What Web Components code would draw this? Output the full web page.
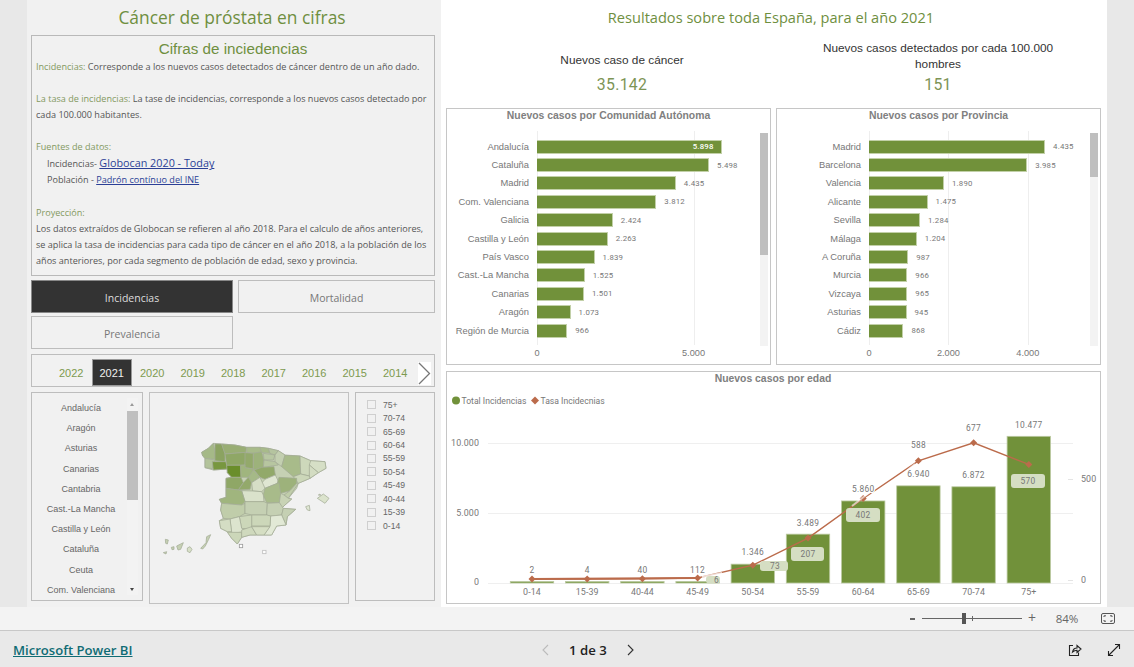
<!DOCTYPE html>
<html lang="es">
<head>
<meta charset="utf-8">
<title>Cáncer de próstata en cifras</title>
<style>
  html, body { margin: 0; padding: 0; height: 100%; overflow: hidden; background: #e9e9e9; }
  body { font-family: "Open Sans", sans-serif; }
</style>
</head>
<body>
<pbi-app></pbi-app>

<script>
const GREEN = '#71913a';
const TITLE_GREEN = '#6f8f3f';
const BAR_DATA_CCAA = [['Andalucía',5898],['Cataluña',5498],['Madrid',4435],['Com. Valenciana',3812],['Galicia',2424],['Castilla y León',2263],['País Vasco',1839],['Cast.-La Mancha',1525],['Canarias',1501],['Aragón',1073],['Región de Murcia',966]];
const BAR_DATA_PROV = [['Madrid',4435],['Barcelona',3985],['Valencia',1890],['Alicante',1475],['Sevilla',1284],['Málaga',1204],['A Coruña',987],['Murcia',966],['Vizcaya',965],['Asturias',945],['Cádiz',868]];

function fmt(n) {
    return String(n).replace(/\B(?=(\d{3})+$)/g, '.');
}

class PbiInfoCard extends HTMLElement {
    constructor() {
        super();
        this.attachShadow({ mode: 'open' });
        this.shadowRoot.innerHTML = `
            <style>
                :host { display: block; box-sizing: border-box; height: 241px; width: 404px; border: 1px solid #b9b9b9; padding: 4px 4px 0 4px; color: #555; font: 9.1px/16.1px "Open Sans", sans-serif; white-space: nowrap; }
                h2 { margin: 0 0 1px; font: 15.2px/18px "Liberation Sans", sans-serif; color: ${TITLE_GREEN}; text-align: center; }
                p { margin: 0 0 16px; }
                b { font-weight: normal; color: #83995f; }
                .in { padding-left: 11px; display: block; }
                a { color: #2b3f96; text-decoration: underline; }
                .big { font-size: 10.8px; }
            </style>
            <h2>Cifras de inciedencias</h2>
            <p><b>Incidencias:</b> Corresponde a los nuevos casos detectados de cáncer dentro de un año dado.</p>
            <p><b>La tasa de incidencias:</b> La tase de incidencias, corresponde a los nuevos casos detectado por<br>cada 100.000 habitantes.</p>
            <p><b>Fuentes de datos:</b><br>
                <span class="in">Incidencias- <a class="big">Globocan 2020 - Today</a></span>
                <span class="in">Población - <a>Padrón contínuo del INE</a></span></p>
            <p><b>Proyección:</b><br>Los datos extraídos de Globocan se refieren al año 2018. Para el calculo de años anteriores,<br>se aplica la tasa de incidencias para cada tipo de cáncer en el año 2018, a la población de los<br>años anteriores, por cada segmento de población de edad, sexo y provincia.</p>
        `;
    }
}
customElements.define('pbi-info-card', PbiInfoCard);

class PbiTabs extends HTMLElement {
    constructor() {
        super();
        this.attachShadow({ mode: 'open' });
        this.shadowRoot.innerHTML = `
            <style>
                :host { display: grid; grid-template-columns: 202px 197px; grid-auto-rows: 33px; column-gap: 5px; row-gap: 3px; }
                div { box-sizing: border-box; display: flex; align-items: center; justify-content: center; padding-top: 2px; border: 1px solid #bdbdbd; color: #777; font: 10.5px "Open Sans", sans-serif; }
                .on { background: #333; color: #ddd; border-color: #888; }
            </style>
            <div class="on">Incidencias</div><div>Mortalidad</div><div>Prevalencia</div>
        `;
    }
}
customElements.define('pbi-tabs', PbiTabs);

class PbiYears extends HTMLElement {
    constructor() {
        super();
        this.attachShadow({ mode: 'open' });
        const years = [2022,2021,2020,2019,2018,2017,2016,2015,2014];
        this.shadowRoot.innerHTML = `
            <style>
                :host { display: flex; position: relative; box-sizing: border-box; width: 404px; height: 33px; border: 1px solid #bdbdbd; padding: 4px 0 0 19px; font: 11px "Liberation Sans", sans-serif; color: #7d9a4f; }
                span { width: 40.5px; display: flex; align-items: center; justify-content: center; padding-top: 1px; box-sizing: border-box; }
                .on { background: #333; color: #f0f0f0; outline: 1px solid #999; outline-offset: -1px; font-weight: normal; }
                svg { position: absolute; right: 3px; top: 7px; background: #fff; }
            </style>
            ${years.map(y => `<span class="${y === 2021 ? 'on' : ''}">${y}</span>`).join('')}
            <svg width="13" height="23" viewBox="0 0 13 23"><polyline points="1,1 11.5,11.5 1,22" fill="none" stroke="#777" stroke-width="1.3"/></svg>
        `;
    }
}
customElements.define('pbi-years', PbiYears);

class PbiRegionList extends HTMLElement {
    constructor() {
        super();
        this.attachShadow({ mode: 'open' });
        const items = ['Andalucía','Aragón','Asturias','Canarias','Cantabria','Cast.-La Mancha','Castilla y León','Cataluña','Ceuta','Com. Valenciana'];
        this.shadowRoot.innerHTML = `
            <style>
                :host { display: block; position: relative; box-sizing: border-box; width: 112px; height: 209px; border: 1px solid #bdbdbd; padding-top: 5px; font: 9px "Liberation Sans", sans-serif; color: #666; }
                div.i { width: 98px; height: 20.2px; display: flex; align-items: center; justify-content: center; }
                .track { position: absolute; left: 95px; top: 5px; width: 11px; height: 197px; background: #f3f3f3; }
                .thumb { position: absolute; left: 0; top: 13px; width: 11px; height: 89px; background: #bfbfbf; }
                .up, .down { position: absolute; left: 3px; width: 0; height: 0; border: 2.5px solid transparent; }
                .up { top: 3px; border-bottom: 3px solid #999; }
                .down { bottom: 2px; border-top: 3px solid #444; }
            </style>
            ${items.map(i => `<div class="i">${i}</div>`).join('')}
            <div class="track"><div class="thumb"></div><div class="up"></div><div class="down"></div></div>
        `;
    }
}
customElements.define('pbi-region-list', PbiRegionList);

class PbiAgeList extends HTMLElement {
    constructor() {
        super();
        this.attachShadow({ mode: 'open' });
        const ages = ['75+','70-74','65-69','60-64','55-59','50-54','45-49','40-44','15-39','0-14'];
        this.shadowRoot.innerHTML = `
            <style>
                :host { display: block; box-sizing: border-box; width: 80px; height: 209px; border: 1px solid #bdbdbd; padding: 5px 0 0 11px; font: 8.6px "Liberation Sans", sans-serif; color: #666; }
                div { display: flex; align-items: center; gap: 7px; height: 13.45px; }
                i { display: block; box-sizing: border-box; width: 9px; height: 9px; border: 1px solid #cfcfcf; }
            </style>
            ${ages.map(a => `<div><i></i>${a}</div>`).join('')}
        `;
    }
}
customElements.define('pbi-age-list', PbiAgeList);

class PbiMap extends HTMLElement {
    constructor() {
        super();
        this.attachShadow({ mode: 'open' });
        // provincias a mano, en coordenadas 540x450
        const coast = '155,97 175,85 190,70 215,72 255,75 290,82 330,82 355,85 385,92 405,105 450,108 482,122 525,125 528,145 505,158 480,175 445,190 440,205 415,235 425,237 405,255 395,265 437,268 412,290 408,315 380,318 365,345 320,345 300,345 275,352 262,372 245,355 232,335 212,325 208,302 220,295 212,270 215,250 208,238 228,232 228,175 245,172 232,158 232,147 190,150 165,143 165,115 158,108';
        const provs = [
            ['155,97 175,85 190,70 195,95 195,118 165,115 158,108','#a5b987'],
            ['195,72 215,72 225,100 225,125 195,122 195,95','#8ba361'],
            ['165,115 195,120 187,146 165,143','#b3c39b'],
            ['187,125 228,125 232,147 190,150','#78973f'],
            ['215,72 255,75 290,82 288,97 225,102','#99ae74'],
            ['290,82 330,82 335,97 310,100 290,97','#a8bb8a'],
            ['225,102 288,97 285,135 230,136','#8fa766'],
            ['230,136 272,136 273,172 245,172 232,158','#6a8e2b'],
            ['285,98 310,100 310,147 285,143','#93a96b'],
            ['310,100 335,95 342,120 340,145 310,150','#9db27b'],
            ['330,82 355,85 360,100 335,97','#a8bb8a'],
            ['355,85 385,92 375,105 360,100','#b5c49f'],
            ['340,100 375,105 370,120 342,120','#b8c7a2'],
            ['385,92 405,105 395,140 375,125 375,105','#c3cfb0'],
            ['342,120 375,125 385,135 340,142','#b7c6a0'],
            ['405,106 450,108 452,162 430,170 395,140','#a8bb8a'],
            ['450,108 482,122 478,168 452,162','#cdd8bb'],
            ['482,122 525,125 528,145 505,158 478,135','#d6dfc6'],
            ['478,135 505,158 480,175 478,168','#d3dcc2'],
            ['452,162 478,168 480,175 445,190 430,170','#ccd7b9'],
            ['272,136 285,135 285,143 310,147 308,165 295,172 273,172','#a0b57e'],
            ['335,142 372,140 376,165 345,178 330,172 312,150','#92a96a'],
            ['295,172 310,150 330,172 305,188','#a5b987'],
            ['228,175 245,172 273,172 280,188 265,210 228,205','#8fa766'],
            ['265,210 280,188 295,172 305,188 300,208','#93a96b'],
            ['345,178 376,165 387,188 345,205 330,195','#dfe6d2'],
            ['305,188 330,172 345,205 335,215 308,213','#d6dec6'],
            ['387,172 440,175 440,190 420,212 392,220 380,195','#9db27b'],
            ['440,190 445,190 415,235 402,225 420,212','#c0cdaa'],
            ['345,205 387,188 392,220 390,248 350,248 340,225','#a8bb8a'],
            ['392,220 402,225 415,235 425,237 405,255 395,265 388,248','#c8d3b5'],
            ['275,212 308,213 335,215 340,225 342,245 285,245','#dae2cb'],
            ['228,205 265,210 275,212 285,245 275,255 215,250 208,238 228,232','#a0b57e'],
            ['215,250 275,255 285,250 285,280 268,290 240,297 220,295 212,270','#c0cdaa'],
            ['285,245 342,245 352,250 350,285 305,285 285,280','#c5d0b3'],
            ['352,250 388,248 400,265 395,285 362,288 350,285','#c5d0b3'],
            ['400,265 437,268 412,290 408,315 395,285','#c5d0b3'],
            ['362,288 395,285 408,315 380,318 365,345 342,345 360,318','#e2e9d6'],
            ['305,285 350,285 362,288 360,318 305,318','#ccd7b9'],
            ['268,290 305,285 305,318 302,328 275,325','#ccd7b9'],
            ['240,297 268,290 275,325 285,335 245,340','#dce4ce'],
            ['208,302 240,297 245,335 232,335 212,325','#d4ddc4'],
            ['232,337 275,337 275,352 262,372 245,355','#ccd7b9'],
            ['275,330 305,320 320,345 300,345 275,352','#cfd9bd'],
            ['305,320 360,320 342,345 320,345','#d5dec3'],
            ['502,235 520,222 537,235 525,250','#dbe3cc'],
            ['505,225 510,222 512,226','#dbe3cc'],
            ['467,260 478,256 480,272 472,270','#e0e7d4'],
            ['46,358 55,360 52,372 47,370','#c5d0b3'],
            ['64,382 72,380 72,388 66,389','#c5d0b3'],
            ['80,378 100,368 92,388 84,390','#c5d0b3'],
            ['112,384 120,380 126,388 120,398 112,394','#d8e0c8'],
            ['152,385 168,368 170,350 182,344 176,358 166,378 158,387','#c5d0b3'],
            ['40,398 50,395 48,402','#c5d0b3']
        ];
        this.shadowRoot.innerHTML = `
            <style>
                :host { display: block; box-sizing: border-box; width: 200px; height: 212px; border: 1px solid #c2c2c2; padding-top: 27px; }
                svg { display: block; filter: blur(.45px); }
            </style>
            <svg width="180" height="150" viewBox="0 0 540 450">
                <polygon points="${coast}" fill="#c5d0b3" stroke="#a3ab95" stroke-width="2.2"/>
                <g stroke="#a3ab95" stroke-width="2.2" stroke-linejoin="round">
                    ${provs.map(p => `<polygon points="${p[0]}" fill="${p[1]}"/>`).join('')}
                </g>
                <rect x="268" y="373" width="10" height="10" fill="#fff" stroke="#9a9a9a" stroke-width="2.4"/>
                <rect x="338" y="391" width="10" height="10" fill="#fff" stroke="#bdbdbd" stroke-width="2.4"/>
            </svg>
        `;
    }
}
customElements.define('pbi-map', PbiMap);

class PbiKpi extends HTMLElement {
    constructor() {
        super();
        this.attachShadow({ mode: 'open' });
        this.shadowRoot.innerHTML = `
            <style>
                :host { display: flex; flex-direction: column; align-items: center; width: 100%; height: 58px; text-align: center; }
                .l { font: 11.8px/16px "Liberation Sans", sans-serif; color: #333; flex: 1; display: flex; align-items: center; }
                .v { font: 400 15.8px/20px Roboto, sans-serif; letter-spacing: .35px; color: #7d9455; }
            </style>
            <div class="l"><span><slot name="label"></slot></span></div>
            <div class="v"><slot name="value"></slot></div>
        `;
    }
}
customElements.define('pbi-kpi', PbiKpi);

class PbiBarChart extends HTMLElement {
    constructor() {
        super();
        this.attachShadow({ mode: 'open' });
    }

    connectedCallback() {
        const data = this.id === 'prov' ? BAR_DATA_PROV : BAR_DATA_CCAA;
        const scale = Number(this.getAttribute('scale'));
        const labelW = Number(this.getAttribute('label-w'));
        const ticks = this.getAttribute('ticks').split(',').map(Number);
        const thumb = this.getAttribute('thumb');
        const inside = this.hasAttribute('first-inside');
        const rows = data.map((d, i) => `
            <div class="row">
                <div class="lab">${d[0]}</div>
                <div class="bar" style="width:${d[1] * scale}px">${inside && i === 0 ? `<span class="in">${fmt(d[1])}</span>` : ''}</div>
                ${inside && i === 0 ? '' : `<span class="val">${fmt(d[1])}</span>`}
            </div>`).join('');
        const grid = ticks.map(t => `<i class="g" style="left:${labelW + 8 + t * scale}px"></i>`).join('');
        const axis = ticks.map(t => `<span class="t" style="left:${labelW + 8 + t * scale}px">${fmt(t)}</span>`).join('');
        this.shadowRoot.innerHTML = `
            <style>
                :host { display: block; box-sizing: border-box; position: relative; width: 325px; height: 257px; background: #fff; border: 1px solid #c6c6c6; color: #777; font-family: "Liberation Sans", sans-serif; }
                h3 { margin: 0; font: bold 10.4px/13px "Liberation Sans", sans-serif; color: #808080; text-align: center; }
                .plot { position: relative; margin-top: 9px; height: 214px; padding-top: 6.5px; box-sizing: border-box; }
                .row { position: relative; display: flex; align-items: center; height: 18.4px; }
                .lab { width: ${labelW}px; margin-right: 8px; text-align: right; font-size: 9.35px; flex: none; white-space: nowrap; }
                .bar { box-sizing: border-box; height: 14px; background: ${GREEN}; border: 1px solid #c2d0a8; border-left: 0; display: flex; align-items: center; justify-content: flex-end; flex: none; }
                .in { color: #fff; font: 500 7.8px Roboto, sans-serif; letter-spacing: .2px; padding-right: 7px; }
                .val { margin-left: 8px; font: 7.8px Roboto, sans-serif; letter-spacing: .2px; color: #777; }
                .g { position: absolute; top: 0; bottom: 0; width: 1px; background: #eee; }
                .axis { position: relative; height: 18px; font-size: 9.2px; color: #777; }
                .t { position: absolute; top: 3px; transform: translateX(-50%); }
                .track { position: absolute; left: 313px; top: 24px; width: 8px; height: 213px; background: #f3f3f3; }
                .thumb { height: ${thumb}px; background: #bfbfbf; }
            </style>
            <h3>${this.getAttribute('heading')}</h3>
            <div class="plot">${grid}${rows}</div>
            <div class="axis">${axis}</div>
            <div class="track"><div class="thumb"></div></div>
        `;
    }
}
customElements.define('pbi-bar-chart', PbiBarChart);

class PbiComboChart extends HTMLElement {
    constructor() {
        super();
        this.attachShadow({ mode: 'open' });
        const cats = ['0-14','15-39','40-44','45-49','50-54','55-59','60-64','65-69','70-74','75+'];
        const tot = [2,4,40,112,1346,3489,5860,6940,6872,10477];
        const x = i => 532 + i * 55.2;
        const yR = v => 580 - v * 0.2027;
        const lineY = [579, 579, 578.7, 578, yR(73), yR(207), yR(402), yR(588), yR(677), yR(570)];
        const barLabelY = [570, 570, 570, 570, 552, 523, 489, 474, 475, 425];
        const bars = tot.map((v, i) => {
            const h = Math.max(v * 0.014, 1.5);
            return `<rect x="${x(i) - 21.7}" y="${583 - h}" width="43.4" height="${h}" fill="${GREEN}" stroke="#bccaa2" stroke-width=".8"/>`;
        }).join('');
        const barLabels = tot.map((v, i) => {
            return `<text x="${x(i)}" y="${barLabelY[i] + 3}" text-anchor="middle" class="n${i > 3 ? ' halo' : ''}">${fmt(v)}</text>`;
        }).join('');
        const pts = lineY.map((y, i) => `${x(i)},${y}`).join(' ');
        const diamonds = lineY.map((y, i) => `<polygon points="${x(i)},${y - 3.5} ${x(i) + 3.5},${y} ${x(i)},${y + 3.5} ${x(i) - 3.5},${y}" fill="#bb6b4b"/>`).join('');
        const chip = (cx, y, w, h, t, tx) => `<rect x="${cx}" y="${y}" width="${w}" height="${h}" rx="3" fill="#d5dec3"/><text x="${tx}" y="${y + h / 2 + 3}" text-anchor="middle" class="n">${t}</text>`;
        this.shadowRoot.innerHTML = `
            <style>
                :host { display: block; box-sizing: border-box; width: 655px; height: 233px; background: #fff; border: 1px solid #c6c6c6; }
                svg { display: block; }
                text { font-family: Roboto, sans-serif; fill: #777; }
                .t { font: bold 10.4px "Liberation Sans", sans-serif; fill: #808080; }
                .n { font-size: 8.4px; letter-spacing: .3px; }
                .ax { font-size: 8.9px; letter-spacing: .1px; }
                .leg { font-size: 8.6px; }
                .halo { paint-order: stroke; stroke: #fff; stroke-width: 2.5px; }
            </style>
            <svg width="653" height="231" viewBox="447 372 653 231">
                <text x="773" y="382" text-anchor="middle" class="t">Nuevos casos por edad</text>
                <circle cx="456" cy="400.5" r="4" fill="${GREEN}"/>
                <text x="461.5" y="403.5" class="leg">Total Incidencias</text>
                <polygon points="535,396.5 539,400.5 535,404.5 531,400.5" fill="#bb6b4b"/>
                <text x="540.5" y="403.5" class="leg">Tasa Incidecnias</text>
                <path d="M488 443.5H1073M488 513.5H1073M488 583.5H1073" stroke="#efefef" fill="none"/>
                <path d="M1068 479.5H1073M1068 580.5H1073" stroke="#e4e4e4" fill="none"/>
                <text x="479" y="446" text-anchor="end" class="ax">10.000</text>
                <text x="479" y="516" text-anchor="end" class="ax">5.000</text>
                <text x="479" y="585" text-anchor="end" class="ax">0</text>
                <text x="1081" y="482" text-anchor="start" class="ax">500</text>
                <text x="1081" y="583" text-anchor="start" class="ax">0</text>
                ${bars}
                <polyline points="${pts}" fill="none" stroke="#bb6b4b" stroke-width="1.4"/>
                <polyline points="${x(0)},579 ${x(3)},578" fill="none" stroke="#bb6b4b" stroke-width="2"/>
                ${diamonds}
                <line x1="702" y1="577" x2="722" y2="573" stroke="#fff" stroke-opacity=".75" stroke-width="2"/>
                <line x1="852" y1="506" x2="870" y2="492" stroke="#fff" stroke-opacity=".6" stroke-width="2"/>
                <line x1="903" y1="474" x2="915" y2="464" stroke="#fff" stroke-opacity=".6" stroke-width="2"/>
                ${barLabels}
                ${chip(706, 576, 14, 7.5, '6', 716.5)}
                ${chip(760, 561, 28, 10, '73', 775)}
                ${chip(791, 547, 33, 14, '207', 808)}
                ${chip(846, 508, 34, 14, '402', 863)}
                ${chip(1011, 474, 34, 14, '570', 1028)}
                <text x="${x(7)}" y="448" text-anchor="middle" class="n halo">588</text>
                <text x="${x(8)}" y="431" text-anchor="middle" class="n halo">677</text>
                ${cats.map((c, i) => `<text x="${x(i)}" y="595" text-anchor="middle" class="ax">${c}</text>`).join('')}
            </svg>
        `;
    }
}
customElements.define('pbi-combo-chart', PbiComboChart);

class PbiZoomBar extends HTMLElement {
    constructor() {
        super();
        this.attachShadow({ mode: 'open' });
        this.shadowRoot.innerHTML = `
            <style>
                :host { display: flex; align-items: center; justify-content: flex-end; box-sizing: border-box; height: 24px; background: #f3f3f3; border-bottom: 1px solid #c8c8c8; padding-right: 19px; color: #666; font: 11.5px "Open Sans", sans-serif; }
                .m { width: 5px; height: 2px; background: #666; }
                .slide { position: relative; width: 100px; height: 1px; background: #666; margin: 0 6px 0 7px; }
                .slide b { position: absolute; left: 40px; top: -5px; width: 4px; height: 11px; background: #555; }
                .slide i { position: absolute; left: 50px; top: -2px; width: 1px; height: 5px; background: #666; }
                .p { font-size: 14px; line-height: 14px; width: 8px; text-align: center; margin-top: -1px; }
                .z { width: 30px; text-align: center; margin: 0 19px 0 16px; }
            </style>
            <div class="m"></div>
            <div class="slide"><b></b><i></i></div>
            <div class="p">+</div>
            <div class="z">84%</div>
            <svg width="14" height="11" viewBox="0 0 14 11" fill="none" stroke="#555"><rect x=".5" y=".5" width="13" height="10" rx="1.5"/><path d="M3 4V2.8H5M9 2.8H11V4M11 7V8.2H9M5 8.2H3V7"/></svg>
        `;
    }
}
customElements.define('pbi-zoom-bar', PbiZoomBar);

class PbiFooter extends HTMLElement {
    constructor() {
        super();
        this.attachShadow({ mode: 'open' });
        this.shadowRoot.innerHTML = `
            <style>
                :host { display: grid; grid-template-columns: 528px auto 1fr; align-items: center; height: 36px; background: #e9e9e9; padding: 1px 13px 0; box-sizing: border-box; }
                a { color: #0f6c74; text-decoration: underline; font: 600 13.1px "Open Sans", sans-serif; }
                .pg { display: flex; align-items: center; gap: 19px; font: 600 13.2px "Open Sans", sans-serif; color: #222; }
                .r { display: flex; justify-content: flex-end; align-items: center; gap: 25px; }
            </style>
            <a>Microsoft Power BI</a>
            <div class="pg">
                <svg width="9" height="12" viewBox="0 0 9 12" fill="none" stroke="#bbb" stroke-width="1.1"><path d="M7 1L2 6l5 5"/></svg>
                <span>1 de 3</span>
                <svg width="9" height="12" viewBox="0 0 9 12" fill="none" stroke="#333" stroke-width="1.1"><path d="M2 1l5 5-5 5"/></svg>
            </div>
            <div class="r">
                <svg width="14" height="14" viewBox="0 0 14 14" fill="none" stroke="#222" stroke-width="1.1"><path d="M5 2.5H1.5V12.5H10.5V9.5"/><path d="M4.5 9C5 6.5 7 5 9 5V2.5L13 6 9 9.5V7.2C7.5 7.2 5.8 7.8 4.5 9Z"/></svg>
                <svg width="14" height="14" viewBox="0 0 14 14" fill="none" stroke="#222" stroke-width="1.1"><path d="M1.5 12.5L12.5 1.5M8 1.5H12.5V6M1.5 8V12.5H6"/></svg>
            </div>
        `;
    }
}
customElements.define('pbi-footer', PbiFooter);

class PbiApp extends HTMLElement {
    constructor() {
        super();
        this.attachShadow({ mode: 'open' });
        this.shadowRoot.innerHTML = `
            <style>
                :host { display: flex; flex-direction: column; width: 1134px; height: 667px; overflow: hidden; }
                .report { display: grid; grid-template-columns: 27px 414px 666px 27px; height: 607px; background: #e8e8e8; }
                .left { background: #f1f1f1; padding: 0 0 0 4px; display: flex; flex-direction: column; }
                .left h1 { margin: 0; height: 35px; font: 17.4px/35px "Open Sans", sans-serif; color: ${TITLE_GREEN}; text-align: center; width: 402px; }
                pbi-tabs { margin-top: 4px; }
                pbi-years { margin-top: 5px; }
                .filters { display: flex; gap: 6px; margin-top: 5px; align-items: flex-start; }
                .right { background: #fff; padding: 0 0 0 5px; display: flex; flex-direction: column; }
                .right h2 { margin: 0; height: 36px; font: 14.6px/34px "Open Sans", sans-serif; color: ${TITLE_GREEN}; text-align: center; width: 650px; }
                .kpis { display: grid; grid-template-columns: 352px 280px; height: 72px; box-sizing: border-box; padding-top: 1px; }
                .one { padding-top: 8px; display: block; }
                .charts { display: flex; gap: 5px; }
                pbi-combo-chart { margin-top: 6px; }
            </style>
            <section class="report">
                <div></div>
                <div class="left">
                    <h1>Cáncer de próstata en cifras</h1>
                    <pbi-info-card></pbi-info-card>
                    <pbi-tabs></pbi-tabs>
                    <pbi-years></pbi-years>
                    <div class="filters">
                        <pbi-region-list></pbi-region-list>
                        <pbi-map></pbi-map>
                        <pbi-age-list></pbi-age-list>
                    </div>
                </div>
                <div class="right">
                    <h2>Resultados sobre toda España, para el año 2021</h2>
                    <div class="kpis">
                        <pbi-kpi><span slot="label" class="one">Nuevos caso de cáncer</span><span slot="value">35.142</span></pbi-kpi>
                        <pbi-kpi><span slot="label">Nuevos casos detectados por cada 100.000<br>hombres</span><span slot="value">151</span></pbi-kpi>
                    </div>
                    <div class="charts">
                        <pbi-bar-chart id="ccaa" heading="Nuevos casos por Comunidad Autónoma" scale="0.0313" label-w="82" ticks="0,5000" thumb="122" first-inside></pbi-bar-chart>
                        <pbi-bar-chart id="prov" heading="Nuevos casos por Provincia" scale="0.0397" label-w="84" ticks="0,2000,4000" thumb="44"></pbi-bar-chart>
                    </div>
                    <pbi-combo-chart></pbi-combo-chart>
                </div>
                <div></div>
            </section>
            <pbi-zoom-bar></pbi-zoom-bar>
            <pbi-footer></pbi-footer>
        `;
    }
}
customElements.define('pbi-app', PbiApp);
</script>
</body>
</html>
